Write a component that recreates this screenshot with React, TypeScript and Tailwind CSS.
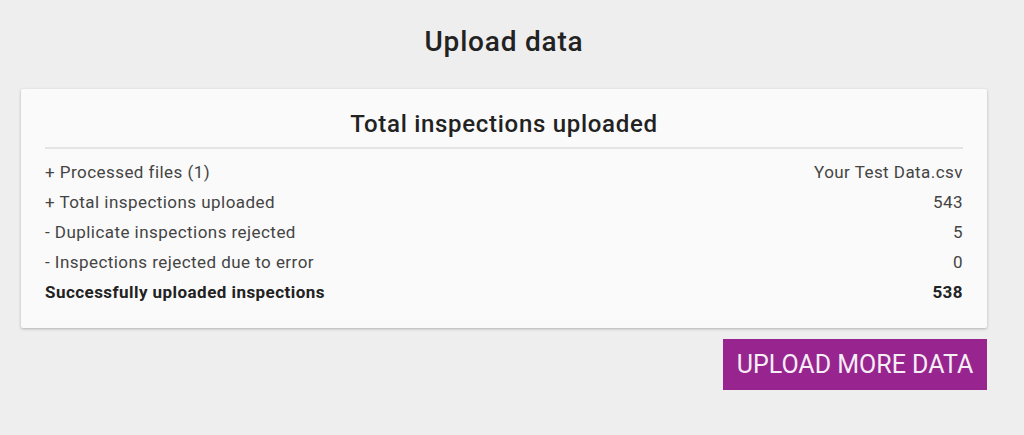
const ROWS: { label: string; value: string; bold?: boolean }[] = [
  { label: '+ Processed files (1)', value: 'Your Test Data.csv' },
  { label: '+ Total inspections uploaded', value: '543' },
  { label: '- Duplicate inspections rejected', value: '5' },
  { label: '- Inspections rejected due to error', value: '0' },
  { label: 'Successfully uploaded inspections', value: '538', bold: true },
];

export default function App() {
  return (
    <div className="min-h-[435px] bg-[#eeeeee] pl-[21px] pr-[37px] pt-[25px] pb-[45px] font-['Roboto',sans-serif] text-[#333]">
      <h1 className="text-center text-[28px] leading-[34px] font-medium tracking-[0.8px] text-[#222]">Upload data</h1>

      <div className="mt-[30px] bg-[#fafafa] rounded-[2px] shadow-[0_1px_3px_rgba(0,0,0,0.25)] px-6 pt-[20px] pb-[21px]">
        <h2 className="text-center text-[24px] leading-[30px] font-medium tracking-[0.7px] text-[#222] pb-[8px] border-b-2 border-[#e4e4e4]">
          Total inspections uploaded
        </h2>
        <div className="mt-[8px]">
          {ROWS.map((r) => (
            <div
              key={r.label}
              className={
                'flex justify-between text-[17px] leading-[30px] tracking-[0.45px] ' +
                (r.bold ? 'font-bold text-[#222]' : 'text-[#444]')
              }
            >
              <span>{r.label}</span>
              <span>{r.value}</span>
            </div>
          ))}
        </div>
      </div>

      <div className="flex justify-end mt-[11px]">
        <button className="w-[264px] h-[51px] bg-[#97248f] text-[#f6eef5] text-[25px] font-normal uppercase">
          Upload more data
        </button>
      </div>
    </div>
  );
}
